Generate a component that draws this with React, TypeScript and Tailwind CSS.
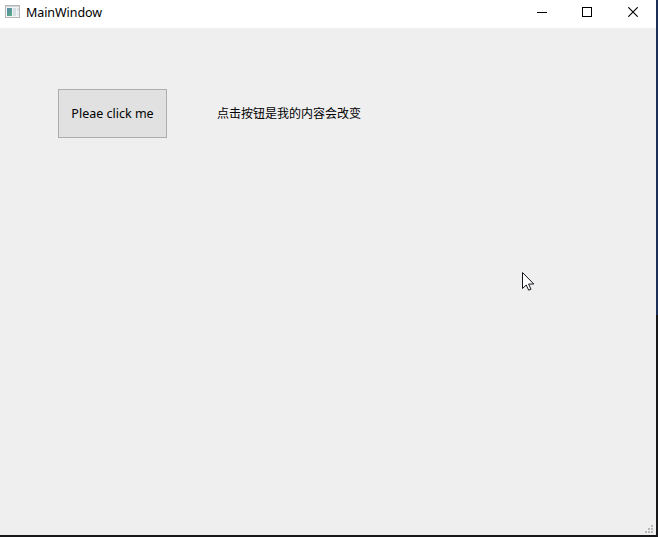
function WindowIcon() {
  return (
    <svg className="mb-0.5" width="15" height="14" viewBox="0 0 15 14" shapeRendering="crispEdges" aria-hidden="true">
      <defs>
        <linearGradient id="pane" x1="0" y1="0" x2="0.6" y2="1">
          <stop offset="0" stopColor="#5b87a8" />
          <stop offset="1" stopColor="#5aa98a" />
        </linearGradient>
      </defs>
      <rect x="0" y="0" width="15" height="13" fill="#b4b8bb" />
      <rect x="1" y="1" width="13" height="11" fill="#f3f4f5" />
      <rect x="1" y="1" width="13" height="1" fill="#cfd3d6" />
      <rect x="2" y="3" width="5" height="8" fill="url(#pane)" />
      <rect x="8" y="3" width="3" height="8" fill="#d3dfe2" />
      <rect x="12" y="3" width="2" height="3" fill="#d6e0e5" />
      <rect x="12" y="7" width="2" height="4" fill="#e6ebed" />
    </svg>
  );
}

function TitleBar() {
  return (
    <header className="flex h-7 shrink-0 items-start bg-white">
      <div className="flex h-[26px] flex-1 items-center gap-1.5 pl-[5px]">
        <WindowIcon />
        <span className="text-[12.5px] leading-4 tracking-[-0.07px]">MainWindow</span>
      </div>
      <button aria-label="Minimize" className="flex h-6 w-[46px] items-center justify-center">
        <svg width="10" height="10" shapeRendering="crispEdges">
          <path d="M0 5.5h10" stroke="#000" />
        </svg>
      </button>
      <button aria-label="Maximize" className="flex h-6 w-[45px] items-center justify-center">
        <svg width="11" height="10" shapeRendering="crispEdges">
          <rect x="0.5" y="0.5" width="9" height="9" fill="none" stroke="#000" />
        </svg>
      </button>
      <button aria-label="Close" className="flex h-6 w-[46px] items-center justify-center">
        <svg width="10" height="10">
          <path d="M0.3 0.3l9.4 9.4M9.7 0.3L0.3 9.7" stroke="#000" strokeWidth="1.15" />
        </svg>
      </button>
    </header>
  );
}

function SizeGrip() {
  return (
    <svg width="8" height="8" shapeRendering="crispEdges" fill="#b8b8b8" aria-hidden="true">
      <path d="M6 0h2v2h-2zM3 3h2v2h-2zM6 3h2v2h-2zM0 6h2v2h-2zM3 6h2v2h-2zM6 6h2v2h-2z" />
    </svg>
  );
}

export default function App() {
  return (
    <div className="relative flex h-[537px] w-[658px] flex-col overflow-hidden bg-[#17171a] font-['Noto_Sans','Noto_Sans_CJK_SC',sans-serif] text-black">
      <div className="flex h-[535px] shrink-0">
        <div className="flex w-[656px] flex-col bg-[#efefef]">
          <TitleBar />
          <main className="flex flex-1 items-start gap-[50px] pt-[61px] pl-[58px]">
            <button className="h-[49px] w-[109px] border border-[#adadad] bg-[#e1e1e1] pt-0.5 text-[12.5px] whitespace-nowrap">
              Pleae click me
            </button>
            <span className="flex h-[49px] items-center pt-px text-[12px] whitespace-nowrap">
              点击按钮是我的内容会改变
            </span>
          </main>
          <footer className="flex justify-end pr-[3px] pb-[2px]">
            <SizeGrip />
          </footer>
        </div>
        <div className="h-[315px] w-0.5 bg-[#1b2f57]" />
      </div>
      <svg className="absolute top-[271px] left-[521px]" width="14" height="21" viewBox="0 0 14 21" aria-hidden="true">
        <path
          d="M1.5 1.5v16l3.7-3.5 2.5 5.2 2.3-1-2.4-5.2h5.2z"
          fill="#fff"
          stroke="#15151f"
          strokeWidth="1"
        />
      </svg>
    </div>
  );
}
